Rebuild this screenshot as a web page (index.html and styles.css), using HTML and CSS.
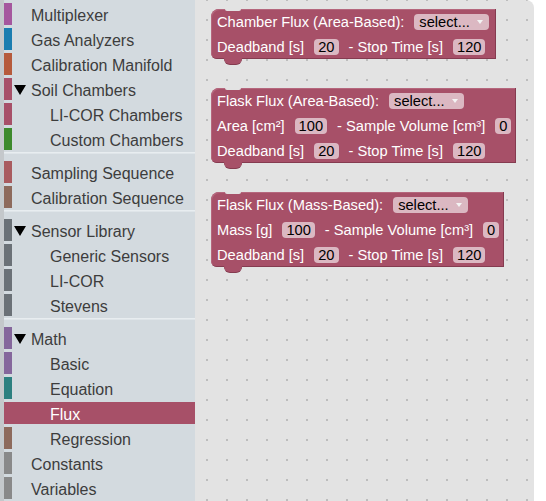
FILE: index.html
```html
<!DOCTYPE html>
<html>
<head>
<meta charset="utf-8">
<link rel="stylesheet" href="styles.css">
</head>
<body>
<div class="app">
  <nav class="toolbox">
    <div class="row"><span class="bar c-mux"></span><span class="twisty"></span><span class="label">Multiplexer</span></div>
    <div class="row"><span class="bar c-gas"></span><span class="twisty"></span><span class="label">Gas Analyzers</span></div>
    <div class="row"><span class="bar c-cal"></span><span class="twisty"></span><span class="label">Calibration Manifold</span></div>
    <div class="row"><span class="bar c-soil"></span><span class="twisty open"></span><span class="label">Soil Chambers</span></div>
    <div class="row nested"><span class="bar c-soil"></span><span class="twisty"></span><span class="label">LI-COR Chambers</span></div>
    <div class="row nested"><span class="bar c-green"></span><span class="twisty"></span><span class="label">Custom Chambers</span></div>
    <div class="sep"></div>
    <div class="row"><span class="bar c-samp"></span><span class="twisty"></span><span class="label">Sampling Sequence</span></div>
    <div class="row"><span class="bar c-brown"></span><span class="twisty"></span><span class="label">Calibration Sequence</span></div>
    <div class="sep"></div>
    <div class="row"><span class="bar c-sens"></span><span class="twisty open"></span><span class="label">Sensor Library</span></div>
    <div class="row nested"><span class="bar c-sens"></span><span class="twisty"></span><span class="label">Generic Sensors</span></div>
    <div class="row nested"><span class="bar c-sens"></span><span class="twisty"></span><span class="label">LI-COR</span></div>
    <div class="row nested"><span class="bar c-sens"></span><span class="twisty"></span><span class="label">Stevens</span></div>
    <div class="sep"></div>
    <div class="row"><span class="bar c-math"></span><span class="twisty open"></span><span class="label">Math</span></div>
    <div class="row nested"><span class="bar c-math"></span><span class="twisty"></span><span class="label">Basic</span></div>
    <div class="row nested"><span class="bar c-teal"></span><span class="twisty"></span><span class="label">Equation</span></div>
    <div class="row nested selected"><span class="bar c-soil"></span><span class="twisty"></span><span class="label">Flux</span></div>
    <div class="row nested"><span class="bar c-brown"></span><span class="twisty"></span><span class="label">Regression</span></div>
    <div class="row"><span class="bar c-grey"></span><span class="twisty"></span><span class="label">Constants</span></div>
    <div class="row"><span class="bar c-grey"></span><span class="twisty"></span><span class="label">Variables</span></div>
  </nav>
  <main class="workspace">
    <div class="block b1">
      <div class="brow"><span>Chamber Flux (Area-Based):</span><span class="dropdown">select...<span class="arrow"></span></span></div>
      <div class="brow"><span>Deadband [s]</span><span class="field">20</span><span>- Stop Time [s]</span><span class="field">120</span></div>
    </div>
    <div class="block">
      <div class="brow"><span>Flask Flux (Area-Based):</span><span class="dropdown">select...<span class="arrow"></span></span></div>
      <div class="brow"><span>Area [cm²]</span><span class="field">100</span><span>- Sample Volume [cm³]</span><span class="field">0</span></div>
      <div class="brow"><span>Deadband [s]</span><span class="field">20</span><span>- Stop Time [s]</span><span class="field">120</span></div>
    </div>
    <div class="block">
      <div class="brow"><span>Flask Flux (Mass-Based):</span><span class="dropdown">select...<span class="arrow"></span></span></div>
      <div class="brow"><span>Mass [g]</span><span class="field">100</span><span>- Sample Volume [cm³]</span><span class="field">0</span></div>
      <div class="brow"><span>Deadband [s]</span><span class="field">20</span><span>- Stop Time [s]</span><span class="field">120</span></div>
    </div>
  </main>
</div>
</body>
</html>
```

FILE: styles.css
```css
html, body {
  margin: 0;
  padding: 0;
  background: #ffffff;
}

.app {
  display: flex;
  width: 546px;
  height: 501px;
  overflow: hidden;
  font-family: "Liberation Sans", Arial, sans-serif;
}

.toolbox {
  width: 191px;
  height: 501px;
  flex: none;
  background: #d3dadf;
  border-left: 4px solid #c4c8cb;
  padding-top: 3px;
  box-sizing: content-box;
}

.row {
  display: flex;
  align-items: center;
  height: 22px;
  margin-bottom: 3px;
  font-size: 16px;
  color: #3d3d3d;
  white-space: nowrap;
}

.label {
  margin-top: 3px;
}

.bar {
  width: 8px;
  height: 22px;
  flex: none;
}

.twisty {
  width: 12px;
  height: 10px;
  margin-left: 2px;
  margin-right: 5px;
  flex: none;
}

.twisty.open {
  width: 0;
  height: 0;
  border-left: 6px solid transparent;
  border-right: 6px solid transparent;
  border-top: 10px solid #000;
  margin-top: 2px;
}

.nested .label {
  margin-left: 19px;
}

.selected {
  background: #a75068;
  color: #ffffff;
}

.sep {
  height: 1px;
  margin: -1px 0 7px;
  background: #e8edf0;
  border-bottom: 1px solid #dfe5e9;
}

.c-mux { background: #a5579e; }
.c-gas { background: #1a7db0; }
.c-cal { background: #b65a3b; }
.c-soil { background: #a75068; }
.c-green { background: #3d8a2d; }
.c-samp { background: #a95b5f; }
.c-brown { background: #8d6a5c; }
.c-sens { background: #6b7177; }
.c-math { background: #85679c; }
.c-teal { background: #2d8080; }
.c-grey { background: #898989; }

.workspace {
  width: 339px;
  height: 501px;
  flex: none;
  background-color: #e3e3e3;
  background-image: radial-gradient(circle at 1px 1px, #bdbdbd 0.8px, transparent 1.3px);
  background-size: 20px 20px;
  background-position: 11px -1px;
  border-top-right-radius: 8px;
  padding: 9px 0 0 16px;
  box-sizing: border-box;
  display: flex;
  flex-direction: column;
  align-items: flex-start;
  gap: 29px;
}

.block {
  position: relative;
  background: #a75068;
  color: #ffffff;
  font-size: 14.67px;
  padding: 0 5px 0 6px;
  border-radius: 8px 0 0 6px;
  box-shadow: inset -1px -1px 0 #853b50, inset 1px 1px 0 #b5677d;
}

.block.b1 {
  padding-right: 7px;
}

.block::before {
  content: "";
  position: absolute;
  left: 14px;
  top: 0;
  width: 16px;
  height: 2px;
  background: #e3e3e3;
  border-radius: 0 0 5px 5px;
}

.block::after {
  content: "";
  position: absolute;
  left: 13px;
  bottom: -5px;
  width: 18px;
  height: 6px;
  background: #a75068;
  border-radius: 0 0 7px 7px;
  box-shadow: 0 1px 0 #853b50;
}

.brow {
  display: flex;
  align-items: center;
  gap: 10px;
  height: 25px;
  white-space: pre;
}

.field {
  background: #dbb8c2;
  color: #000;
  border-radius: 4px;
  padding: 0 4px;
  height: 16px;
  line-height: 16px;
}

.dropdown {
  display: flex;
  align-items: center;
  background: #dbb8c2;
  color: #000;
  border-radius: 4px;
  padding: 0 6px 0 5px;
  height: 16px;
  line-height: 16px;
  gap: 7px;
}

.arrow {
  width: 0;
  height: 0;
  border-left: 3px solid transparent;
  border-right: 3px solid transparent;
  border-top: 4px solid #f4f4f4;
}
```
